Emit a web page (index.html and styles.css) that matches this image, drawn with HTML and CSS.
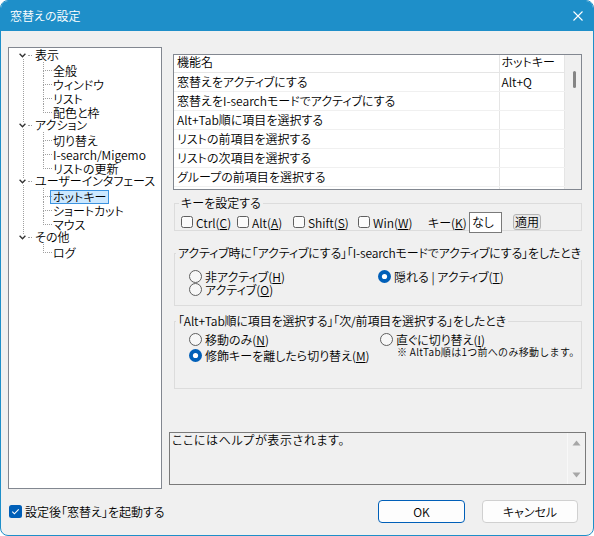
FILE: index.html
```html
<!DOCTYPE html>
<html lang="ja">
<head>
    <meta charset="UTF-8">
    <title>窓替えの設定</title>
    <link rel="stylesheet" href="styles.css">
</head>
<body>
<div class="window">
    <header class="titlebar">
        <span class="title">窓替えの設定</span>
        <svg class="close" width="10" height="10" viewBox="0 0 10 10"><path d="M0.5 0.5L9.5 9.5M9.5 0.5L0.5 9.5" stroke="#fff" stroke-width="1.1" fill="none"/></svg>
    </header>

    <div class="main">
        <ul class="tree">
            <li class="node">
                <div class="row"><svg class="chev" width="7" height="5" viewBox="0 0 7 5"><path d="M0.6 0.8L3.5 3.8L6.4 0.8" stroke="#333" stroke-width="1.3" fill="none"/></svg><span class="branch"></span><span class="label">表示</span></div>
                <ul class="kids">
                    <li><span class="label">全般</span></li>
                    <li><span class="label">ウィンドウ</span></li>
                    <li><span class="label">リスト</span></li>
                    <li><span class="label">配色と枠</span></li>
                </ul>
            </li>
            <li class="node">
                <div class="row"><svg class="chev" width="7" height="5" viewBox="0 0 7 5"><path d="M0.6 0.8L3.5 3.8L6.4 0.8" stroke="#333" stroke-width="1.3" fill="none"/></svg><span class="branch"></span><span class="label">アクション</span></div>
                <ul class="kids">
                    <li><span class="label">切り替え</span></li>
                    <li><span class="label">I-search/Migemo</span></li>
                    <li><span class="label">リストの更新</span></li>
                </ul>
            </li>
            <li class="node">
                <div class="row"><svg class="chev" width="7" height="5" viewBox="0 0 7 5"><path d="M0.6 0.8L3.5 3.8L6.4 0.8" stroke="#333" stroke-width="1.3" fill="none"/></svg><span class="branch"></span><span class="label">ユーザーインタフェース</span></div>
                <ul class="kids">
                    <li><span class="label selected">ホットキー</span></li>
                    <li><span class="label">ショートカット</span></li>
                    <li><span class="label">マウス</span></li>
                </ul>
            </li>
            <li class="node">
                <div class="row"><svg class="chev" width="7" height="5" viewBox="0 0 7 5"><path d="M0.6 0.8L3.5 3.8L6.4 0.8" stroke="#333" stroke-width="1.3" fill="none"/></svg><span class="branch"></span><span class="label">その他</span></div>
                <ul class="kids">
                    <li><span class="label">ログ</span></li>
                </ul>
            </li>
        </ul>

        <div class="panel">
            <div class="list">
                <table>
                    <tr><th class="name">機能名</th><th class="key">ホットキー</th></tr>
                    <tr><td>窓替えをアクティブにする</td><td class="key">Alt+Q</td></tr>
                    <tr><td>窓替えをI-searchモードでアクティブにする</td><td class="key"></td></tr>
                    <tr><td>Alt+Tab順に項目を選択する</td><td class="key"></td></tr>
                    <tr><td>リストの前項目を選択する</td><td class="key"></td></tr>
                    <tr><td>リストの次項目を選択する</td><td class="key"></td></tr>
                    <tr><td>グループの前項目を選択する</td><td class="key"></td></tr>
                    <tr><td>グループの次項目を選択する</td><td class="key"></td></tr>
                </table>
                <div class="vscroll"><div class="thumb"></div></div>
            </div>

            <fieldset class="group keys">
                <legend>キーを設定する</legend>
                <div class="keyrow">
                    <label class="check w-ctrl"><svg width="12" height="12" viewBox="0 0 12 12"><rect x="0.5" y="0.5" width="11" height="11" rx="2" fill="#fbfbfb" stroke="#5f5f5f"/></svg><span>Ctrl(<u>C</u>)</span></label>
                    <label class="check w-alt"><svg width="12" height="12" viewBox="0 0 12 12"><rect x="0.5" y="0.5" width="11" height="11" rx="2" fill="#fbfbfb" stroke="#5f5f5f"/></svg><span>Alt(<u>A</u>)</span></label>
                    <label class="check w-shift"><svg width="12" height="12" viewBox="0 0 12 12"><rect x="0.5" y="0.5" width="11" height="11" rx="2" fill="#fbfbfb" stroke="#5f5f5f"/></svg><span>Shift(<u>S</u>)</span></label>
                    <label class="check w-win"><svg width="12" height="12" viewBox="0 0 12 12"><rect x="0.5" y="0.5" width="11" height="11" rx="2" fill="#fbfbfb" stroke="#5f5f5f"/></svg><span>Win(<u>W</u>)</span></label>
                    <span class="keylabel">キー(<u>K</u>)</span>
                    <span class="keybox">なし</span>
                    <span class="apply">適用</span>
                </div>
            </fieldset>

            <fieldset class="group active">
                <legend class="long">アクティブ時に「アクティブにする」「I-searchモードでアクティブにする」をしたとき</legend>
                <div class="radios">
                    <label class="radio"><svg width="13" height="13" viewBox="0 0 13 13"><circle cx="6.5" cy="6.5" r="6" fill="#f7f7f7" stroke="#5f5f5f"/></svg><span>非アクティブ(<u>H</u>)</span></label>
                    <label class="radio"><svg width="13" height="13" viewBox="0 0 13 13"><circle cx="6.5" cy="6.5" r="6.5" fill="#005fb8"/><circle cx="6.5" cy="6.5" r="2.6" fill="#fff"/></svg><span>隠れる | アクティブ(<u>T</u>)</span></label>
                    <label class="radio"><svg width="13" height="13" viewBox="0 0 13 13"><circle cx="6.5" cy="6.5" r="6" fill="#f7f7f7" stroke="#5f5f5f"/></svg><span>アクティブ(<u>O</u>)</span></label>
                </div>
            </fieldset>

            <fieldset class="group alttab">
                <legend class="long">「Alt+Tab順に項目を選択する」「次/前項目を選択する」をしたとき</legend>
                <div class="cols">
                    <div class="col left">
                        <label class="radio"><svg width="13" height="13" viewBox="0 0 13 13"><circle cx="6.5" cy="6.5" r="6" fill="#f7f7f7" stroke="#5f5f5f"/></svg><span>移動のみ(<u>N</u>)</span></label>
                        <label class="radio"><svg width="13" height="13" viewBox="0 0 13 13"><circle cx="6.5" cy="6.5" r="6.5" fill="#005fb8"/><circle cx="6.5" cy="6.5" r="2.6" fill="#fff"/></svg><span>修飾キーを離したら切り替え(<u>M</u>)</span></label>
                    </div>
                    <div class="col">
                        <label class="radio"><svg width="13" height="13" viewBox="0 0 13 13"><circle cx="6.5" cy="6.5" r="6" fill="#f7f7f7" stroke="#5f5f5f"/></svg><span>直ぐに切り替え(<u>I</u>)</span></label>
                        <p class="note">※ AltTab順は1つ前へのみ移動します。</p>
                    </div>
                </div>
            </fieldset>

            <div class="help">
                <p>ここにはヘルプが表示されます。</p>
                <div class="hscroll">
                    <svg width="9" height="6" viewBox="0 0 9 6"><path d="M4.5 0.5L8.5 5.5H0.5Z" fill="#a6a6a6"/></svg>
                    <svg width="9" height="6" viewBox="0 0 9 6"><path d="M0.5 0.5H8.5L4.5 5.5Z" fill="#a6a6a6"/></svg>
                </div>
            </div>
        </div>
    </div>

    <footer class="footer">
        <label class="check startup"><svg width="13" height="13" viewBox="0 0 13 13"><rect x="0" y="0" width="13" height="13" rx="2.5" fill="#005fb8"/><path d="M3.3 6.7L5.4 8.8L9.7 4.4" stroke="#fff" stroke-width="1.1" fill="none"/></svg><span>設定後「窓替え」を起動する</span></label>
        <button class="btn ok">OK</button>
        <button class="btn cancel">キャンセル</button>
    </footer>
</div>
</body>
</html>
```

FILE: styles.css
```css
* {
    box-sizing: border-box;
}
body {
    margin: 0;
    background: #fff;
    font-family: "Noto Sans CJK JP", "Noto Sans", sans-serif;
    font-size: 12px;
    font-weight: 350;
    color: #000;
    font-feature-settings: "palt";
}
u {
    text-decoration-thickness: 1px;
    text-underline-offset: 1px;
}
.window {
    width: 594px;
    height: 536px;
    border: 1px solid #1e8fc9;
    border-radius: 8px;
    background: #f0f0f0;
    overflow: hidden;
    display: flex;
    flex-direction: column;
}
.titlebar {
    flex: none;
    height: 30px;
    background: #1e8fc9;
    color: #fff;
    display: flex;
    align-items: center;
    justify-content: space-between;
    padding: 0 10px 1px 9px;
    line-height: 14px;
}

/* main area */
.main {
    display: flex;
    padding: 16px 0 0 7px;
    height: 458px;
}
.tree {
    list-style: none;
    margin: 0;
    padding: 0;
    width: 154px;
    height: 442px;
    border: 1px solid #828790;
    background: #fff;
}
.tree ul {
    list-style: none;
    margin: 0;
}
.node {
    position: relative;
}
.node::before {
    content: "";
    position: absolute;
    left: 14px;
    top: 11px;
    bottom: -4px;
    border-left: 1px dotted #a0a0a0;
}
.node:last-child::before {
    display: none;
}
.row {
    display: flex;
    align-items: center;
    height: 14px;
    padding-left: 10px;
}
.chev {
    flex: none;
}
.branch {
    width: 4px;
    margin-left: 2px;
    border-top: 1px dotted #a0a0a0;
}
.label {
    display: inline-block;
    height: 14px;
    line-height: 12px;
    padding: 0 2px;
    border: 1px solid transparent;
    white-space: nowrap;
}
.label.selected {
    background: #cce8ff;
    border-color: #3c93e0;
}
.kids {
    padding: 0 0 0 34px;
}
.kids li {
    position: relative;
    height: 14px;
    padding-left: 7px;
}
.kids li::before {
    content: "";
    position: absolute;
    left: 0;
    top: 0;
    width: 8px;
    height: 8px;
    border-left: 1px dotted #a0a0a0;
    border-bottom: 1px dotted #a0a0a0;
}
.kids li:not(:last-child)::after {
    content: "";
    position: absolute;
    left: 0;
    top: 8px;
    bottom: 0;
    border-left: 1px dotted #a0a0a0;
}

.panel {
    width: 417px;
    margin-left: 7px;
    display: flex;
    flex-direction: column;
}

/* hotkey list */
.list {
    margin: 7px 0 0 4px;
    width: 409px;
    height: 136px;
    border: 1px solid #828790;
    background: #fff;
    display: flex;
    overflow: hidden;
}
.list table {
    border-collapse: collapse;
    width: 390px;
    flex: none;
    table-layout: fixed;
}
.list th,
.list td {
    padding: 0 0 0 3px;
    text-align: left;
    font-weight: inherit;
    white-space: nowrap;
    border-right: 1px solid #e5e5e5;
    line-height: 14px;
}
.list th {
    height: 17px;
    vertical-align: top;
    border-bottom: 1px solid #e5e5e5;
}
.list td {
    height: 19px;
    border-bottom: 1px solid #f0f0f0;
}
.list .name {
    width: 325px;
}
.list .key {
    width: 65px;
    padding-left: 2px;
}
.vscroll {
    flex: 1;
    background: #f0f0f0;
    padding: 16px 0 0 8px;
}
.thumb {
    width: 3px;
    height: 17px;
    border-radius: 2px;
    background: #858585;
}

/* group boxes */
.group {
    margin: 0 0 0 5px;
    padding: 0;
    width: 408px;
    min-width: 0;
    border: 1px solid #dcdcdc;
}
.group legend {
    padding: 0 2px;
    margin-left: 4px;
    line-height: 14px;
    white-space: nowrap;
}
.group legend.long {
    margin-left: 1px;
    letter-spacing: -0.15px;
}
.keys {
    margin-top: 6px;
    height: 35px;
}
.keyrow {
    display: flex;
    align-items: center;
    height: 14px;
    margin: 5px 0 0 6px;
}
.check,
.radio {
    display: inline-flex;
    align-items: center;
    white-space: nowrap;
    line-height: 13px;
}
.check span,
.radio span {
    margin-left: 3px;
}
.w-ctrl { width: 56px; }
.w-alt { width: 56px; }
.w-shift { width: 65px; }
.w-win { width: 70px; }
.keylabel {
    width: 41px;
}
.keybox {
    flex: none;
    width: 33px;
    height: 21px;
    margin-top: 1px;
    padding: 2px 0 0 2px;
    background: #fff;
    border: 1px solid #7a7a7a;
    line-height: 14px;
}
.apply {
    margin-left: 11px;
    height: 16px;
    width: 28px;
    border: 1px solid #b5b5b5;
    border-radius: 3px;
    background: #e9e9e9;
    text-align: center;
    line-height: 14px;
}

.active {
    margin-top: 15px;
    height: 60px;
}
.radios {
    display: grid;
    grid-template-columns: 189px 1fr;
    grid-auto-rows: 13px;
    padding: 10px 0 0 14px;
}
.alttab {
    margin-top: 8px;
    height: 75px;
}
.cols {
    display: flex;
    padding: 5px 0 0 14px;
}
.col {
    display: flex;
    flex-direction: column;
    gap: 3px;
}
.col.left {
    width: 191px;
}
.note {
    margin: -3px 0 0 17px;
    font-size: 10px;
    line-height: 11px;
    letter-spacing: 0.3px;
    font-feature-settings: normal;
    white-space: nowrap;
}

/* help */
.help {
    margin-top: 43px;
    width: 417px;
    height: 53px;
    border: 1px solid #7a7a7a;
    display: flex;
}
.help p {
    flex: 1;
    margin: 0;
    padding-left: 2px;
    line-height: 14px;
    letter-spacing: 0.6px;
}
.hscroll {
    width: 18px;
    border-left: 1px solid #f8f8f8;
    display: flex;
    flex-direction: column;
    justify-content: space-between;
    align-items: center;
    padding: 7px 0 6px;
}

/* footer */
.footer {
    display: flex;
    align-items: center;
    padding: 11px 15px 0 8px;
}
.startup span {
    margin-left: 3px;
}
.btn {
    height: 23px;
    font: inherit;
    color: #000;
    background: #fdfdfd;
    border: 1px solid #d0d0d0;
    border-radius: 4px;
    padding: 0;
}
.ok {
    width: 87px;
    margin-left: auto;
    border-color: #005fb8;
}
.cancel {
    width: 96px;
    margin-left: 17px;
}
```
